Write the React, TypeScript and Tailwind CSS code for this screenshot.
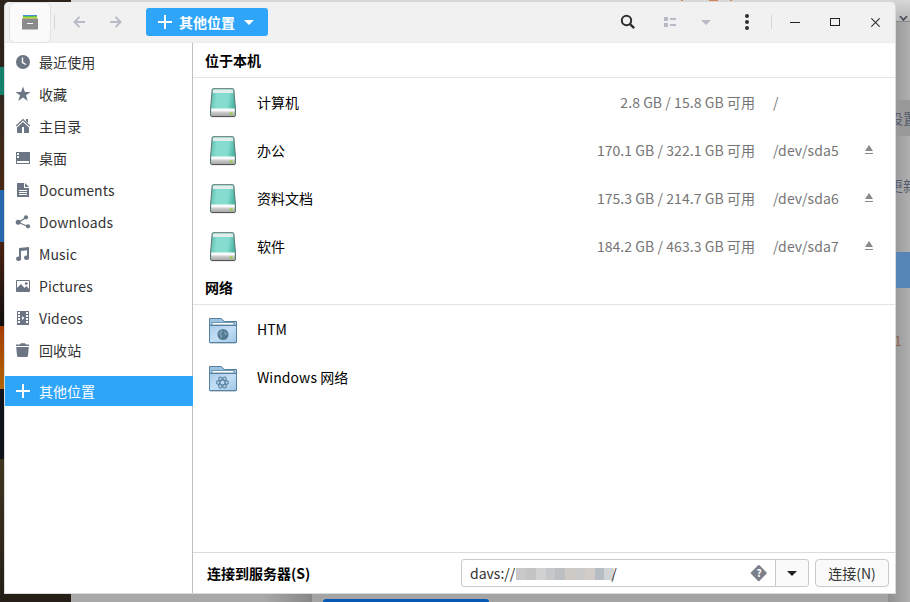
/**
 * Files window, "Other Locations" view
 * Header bar, places sidebar, mounted volumes, network list and server bar
 */
import type { ReactNode } from "react";

interface Place {
  label: string;
  icon: ReactNode;
}

interface Volume {
  name: string;
  usage: string;
  mount: string;
  ejectable: boolean;
}

/* ─── Sidebar icons ─── */
const places: Place[] = [
  {
    label: "最近使用",
    icon: (
      <>
        <circle cx="8" cy="8" r="7" />
        <path d="M7.5 3.5V8.5L11 10.5" fill="none" stroke="#fff" strokeWidth="1.4" />
      </>
    ),
  },
  {
    label: "收藏",
    icon: <path d="M8 0.5L9.9 5.9H15.6L11 9.3L12.7 15L8 11.6L3.3 15L5 9.3L0.4 5.9H6.1Z" />,
  },
  {
    label: "主目录",
    icon: (
      <>
        <path d="M1.2 8L8 1.6L14.8 8" fill="none" stroke="#6b7583" strokeWidth="1.3" />
        <path d="M11 1H13V5L11 3.2Z" />
        <path d="M8 4L14 9.5V15H9V9H7V15H2V9.5Z" />
      </>
    ),
  },
  {
    label: "桌面",
    icon: (
      <>
        <path d="M1 2H15V14H1Z" />
        <path d="M2 11H14V13H2ZM2 3H4V5H2ZM2 6H4V8H2Z" fill="#fff" />
      </>
    ),
  },
  {
    label: "Documents",
    icon: (
      <>
        <path d="M2 1H9V6H14V15H2Z" />
        <path d="M10 1L14 5H10Z" />
        <path d="M4 8.5H12M4 10.5H12M4 12.5H12" stroke="#fff" />
      </>
    ),
  },
  {
    label: "Downloads",
    icon: (
      <>
        <path d="M11 3.5L3.5 8.5L13 12.5" fill="none" stroke="#6b7583" strokeWidth="1.2" />
        <circle cx="11" cy="3.3" r="2.1" />
        <circle cx="3.2" cy="8.3" r="2.5" />
        <circle cx="13" cy="12.3" r="2.1" />
      </>
    ),
  },
  {
    label: "Music",
    icon: (
      <>
        <path d="M4 2L14 1V12H12V4.3L6 5V13H4Z" />
        <ellipse cx="3.6" cy="12.8" rx="2.6" ry="2.2" />
        <ellipse cx="11.6" cy="11.8" rx="2.6" ry="2.2" />
      </>
    ),
  },
  {
    label: "Pictures",
    icon: (
      <>
        <path d="M1.5 2.5H14.5V13.5H1.5Z" fill="none" stroke="#6b7583" />
        <path d="M2 10L6 6L9.5 10L11.5 8L14 11V13H2Z" />
        <circle cx="11.2" cy="5.6" r="1.4" />
      </>
    ),
  },
  {
    label: "Videos",
    icon: (
      <>
        <path d="M2 1H14V15H2Z" />
        <path d="M4 2V14M12 2V14" stroke="#fff" strokeWidth="2" strokeDasharray="2 1" />
        <path d="M7 6L9.5 8L7 10Z" fill="#fff" />
      </>
    ),
  },
  {
    label: "回收站",
    icon: (
      <>
        <path d="M1 2.4H5L6 1.2H10L11 2.4H14V4H1Z" />
        <path d="M1.2 5H13.8L13 13.5Q12.8 15 11.5 15H3.5Q2.2 15 2 13.5Z" />
      </>
    ),
  },
];

const volumes: Volume[] = [
  { name: "计算机", usage: "2.8 GB / 15.8 GB 可用", mount: "/", ejectable: false },
  { name: "办公", usage: "170.1 GB / 322.1 GB 可用", mount: "/dev/sda5", ejectable: true },
  { name: "资料文档", usage: "175.3 GB / 214.7 GB 可用", mount: "/dev/sda6", ejectable: true },
  { name: "软件", usage: "184.2 GB / 463.3 GB 可用", mount: "/dev/sda7", ejectable: true },
];

function DriveIcon() {
  return (
    <svg width="28" height="30" viewBox="0 0 28 30" className="-mt-px shrink-0">
      <defs>
        <linearGradient id="teal" x1="0" x2="1" y1="0" y2="0.15">
          <stop offset="0" stopColor="#55b9a9" />
          <stop offset="0.3" stopColor="#86dccf" />
          <stop offset="0.75" stopColor="#84dccf" />
          <stop offset="1" stopColor="#4cb5a4" />
        </linearGradient>
        <linearGradient id="steel" x1="0" x2="0" y1="0" y2="1">
          <stop offset="0" stopColor="#fff" />
          <stop offset="0.35" stopColor="#f4f4f4" />
          <stop offset="0.45" stopColor="#cfcfcf" />
          <stop offset="1" stopColor="#a9a9a9" />
        </linearGradient>
      </defs>
      <path d="M3.2 1.5Q3.3 0.7 4.2 0.7H23.8Q24.7 0.7 24.8 1.5L26.5 21V27Q26.5 28.5 25 28.5H3Q1.5 28.5 1.5 27V21Z" fill="url(#teal)" stroke="#5d7572" />
      <path d="M4.2 1.4H23.8L24.2 5H3.8Z" fill="#e2ecea" />
      <path d="M2.2 20.5H25.8V27Q25.8 28 24.8 28H3.2Q2.2 28 2.2 27Z" fill="url(#steel)" />
      <path d="M2.5 28.6H25.5" stroke="#515151" />
      <ellipse cx="22.3" cy="25.5" rx="1.6" ry="1.1" fill="#8fd01c" />
    </svg>
  );
}

function FolderIcon({ children }: { children: ReactNode }) {
  return (
    <svg width="30" height="28" viewBox="0 0 30 28" className="mt-0.5 shrink-0">
      <defs>
        <linearGradient id="folder" x1="0" x2="1" y1="0" y2="1">
          <stop offset="0" stopColor="#a9cbe9" />
          <stop offset="0.5" stopColor="#c3def5" />
          <stop offset="1" stopColor="#a0c5e6" />
        </linearGradient>
      </defs>
      <path d="M1.5 8V1.5H13L16.5 4.5H28.5V10H1.5Z" fill="#9cc2e3" stroke="#5582a0" />
      <path d="M4 5.5H26V8H4Z" fill="#fff" stroke="#5582a0" strokeWidth="0.8" />
      <path d="M1.5 8.5H28.5V25.5H1.5Z" fill="url(#folder)" stroke="#5582a0" />
      <path d="M2 26.5H28" stroke="#7e8f9b" strokeOpacity="0.4" />
      {children}
    </svg>
  );
}

/* ─── Desktop behind the window ─── */
function Backdrop() {
  return (
    <div className="absolute inset-0 flex bg-[#a5a5a5]">
      <div className="flex w-[71px] shrink-0 flex-col">
        <div className="h-[67px] bg-[#2c231d]" />
        <div className="h-[28px] bg-[#13816c]" />
        <div className="h-[95px] bg-linear-to-b from-[#33281e] to-[#4a2713]" />
        <div className="h-[52px] bg-[#2768ad]" />
        <div className="h-[84px] bg-linear-to-b from-[#4a220e] to-[#110c0d]" />
        <div className="h-[63px] bg-linear-to-b from-[#a63c05] to-[#b06503]" />
        <div className="h-[70px] bg-[#10131c]" />
        <div className="flex-1 bg-linear-to-b from-[#40351f] to-[#241e16]" />
      </div>
      <div className="flex min-w-0 flex-1 flex-col justify-between">
        <div className="flex h-[3px] items-start bg-[#d7d7d7]">
          <div className="ml-[610px] h-px w-[2px] bg-[#d38653]" />
          <div className="ml-[26px] h-px w-[9px] bg-[#d38653]" />
          <div className="ml-[12px] h-px w-[2px] bg-[#d38653]" />
        </div>
        <div className="flex h-[9px]">
          <div className="w-[240px] shrink-0 bg-linear-to-r from-[#a8a8a8] from-80% to-[#888]" />
          <div className="flex flex-1 items-end border-l border-[#858585] bg-[#a4a4a4]">
            <div className="ml-[11px] h-[3px] w-[166px] rounded-t-lg bg-[#0759b5]" />
          </div>
        </div>
      </div>
      <div className="flex w-[22px] shrink-0 flex-col bg-linear-to-r from-[#8f8f8f] to-[#b0b0b0] text-sm text-[#555c6c]">
        <div className="flex h-[22px] items-end border-b border-[#888] bg-linear-to-b from-[#d7d7d7] to-[#b5b5b5]">
          <svg width="9" height="5" viewBox="0 0 9 5" className="ml-[11px]" fill="none" stroke="#3c4550" strokeWidth="1.5">
            <path d="M1 0L4.5 4L8 0" />
          </svg>
        </div>
        <div className="mt-[78px] flex h-[36px] items-center bg-[#999] pl-px whitespace-nowrap">设置</div>
        <div className="mt-[38px] flex h-[22px] items-center pl-px whitespace-nowrap">更新</div>
        <div className="mt-[56px] h-[36px] bg-[#5686b7]" />
        <div className="mt-[42px] h-[20px] pl-1.5 leading-5 text-[#8d6653]">1</div>
      </div>
    </div>
  );
}

function HeaderBar() {
  return (
    <header className="flex h-[41px] shrink-0 items-center border-b border-[#ebebeb] bg-[#f1f1f1] pl-1">
      <div className="flex h-[41px] w-[42px] items-center justify-center rounded-md border border-[#e2e2e2] bg-[#fafafa]">
        <svg width="16" height="15" viewBox="0 0 16 15">
          <path d="M1 0H15V2H1Z" fill="#4a90d9" />
          <path d="M1 1H15V3H1Z" fill="#56c44a" />
          <path d="M1 2.3H15V4H1Z" fill="#dce146" />
          <path d="M0 3.5H16V14.5H0Z" fill="#8b8b8b" />
          <path d="M5 8.5H11" stroke="#fff" />
        </svg>
      </div>
      <div className="ml-[3px] h-3.5 w-px bg-[#d5d5d5]" />
      <svg width="12" height="12" viewBox="0 0 12 12" className="ml-[18px]" fill="none" stroke="#b8bbc5" strokeWidth="1.9">
        <path d="M12 6H1.5M6.5 0.8L1.4 6L6.5 11.2" />
      </svg>
      <svg width="12" height="12" viewBox="0 0 12 12" className="ml-[25px]" fill="none" stroke="#b8bbc5" strokeWidth="1.9">
        <path d="M0 6H10.5M5.5 0.8L10.6 6L5.5 11.2" />
      </svg>
      <button className="ml-6 flex h-7 w-[122px] items-center rounded-[3px] bg-[#2ea5f8] pl-3 text-sm font-bold text-white">
        <svg width="14" height="14" viewBox="0 0 14 14" stroke="#fff" strokeWidth="2">
          <path d="M7 0V14M0 7H14" />
        </svg>
        <span className="ml-[7px] leading-5">其他位置</span>
        <svg width="10" height="5" viewBox="0 0 10 5" className="ml-[9px]" fill="#fff">
          <path d="M0 0H10L5 5Z" />
        </svg>
      </button>
      <svg width="16" height="16" viewBox="0 0 16 16" className="ml-[352px]" fill="none" stroke="#2d2f30" strokeWidth="2">
        <circle cx="6.5" cy="6.5" r="4.7" />
        <path d="M9.8 9.8L14.2 14.2" strokeWidth="2.4" />
      </svg>
      <svg width="12" height="10" viewBox="0 0 12 10" className="ml-7" fill="#b8bbc5">
        <path d="M0 0H4V4H0ZM0 6H4V10H0ZM6 1H12V3H6ZM6 7H12V9H6Z" />
      </svg>
      <svg width="10" height="5" viewBox="0 0 10 5" className="ml-[25px]" fill="#b8bbc5">
        <path d="M0 0H10L5 5Z" />
      </svg>
      <svg width="4" height="16" viewBox="0 0 4 16" className="ml-[34px]" fill="#2d2f30">
        <circle cx="2" cy="2" r="2" />
        <circle cx="2" cy="8" r="2" />
        <circle cx="2" cy="14" r="2" />
      </svg>
      <div className="ml-[22px] h-3.5 w-px bg-[#d5d5d5]" />
      <div className="ml-[18px] h-px w-2.5 bg-[#222]" />
      <div className="ml-[30px] h-2 w-2.5 border border-[#222]" />
      <svg width="9" height="9" viewBox="0 0 9 9" className="ml-[31px]" stroke="#333" strokeWidth="1.1">
        <path d="M0.3 0.3L8.7 8.7M8.7 0.3L0.3 8.7" />
      </svg>
    </header>
  );
}

function Sidebar() {
  return (
    <nav className="w-[188px] shrink-0 border-r border-[#bfc0c2] pt-1 text-sm text-[#333]">
      {places.map((place) => (
        <div key={place.label} className="flex h-8 items-center pl-2.5">
          <svg width="16" height="16" viewBox="0 0 16 16" fill="#6b7583" className="-mt-0.5">
            {place.icon}
          </svg>
          <span className="-mt-0.5 ml-2 leading-5 tracking-[0.1px]">{place.label}</span>
        </div>
      ))}
      <div className="-mr-px mt-[9px] flex h-[30px] items-center bg-[#2ea5f8] pl-[11px] text-white">
        <svg width="14" height="14" viewBox="0 0 14 14" stroke="#fff" strokeWidth="2">
          <path d="M7 0V14M0 7H14" />
        </svg>
        <span className="ml-[9px] leading-5">其他位置</span>
      </div>
    </nav>
  );
}

function ServerBar() {
  return (
    <footer className="flex h-[41px] items-center border-t border-[#dcdcde] pr-1.5 pl-3.5 text-sm">
      <span className="w-[254px] font-bold">连接到服务器(S)</span>
      <div className="flex h-7 w-[348px] items-center rounded-[3px] border border-[#cacaca] pl-2 text-[#333]">
        <span>davs://</span>
        <div className="mt-0.5 ml-px flex h-3 w-[98px]">
          <div className="flex-1 bg-[#c9c9c9]" />
          <div className="flex-1 bg-[#c4c4c4]" />
          <div className="flex-1 bg-[#d1d1d1]" />
          <div className="flex-1 bg-[#c5c7c8]" />
          <div className="flex-1 bg-[#bbbfc1]" />
          <div className="flex-1 bg-[#cecac6]" />
          <div className="flex-1 bg-[#cacaca]" />
          <div className="flex-1 bg-[#d3cbc8]" />
          <div className="flex-1 bg-[#b6bcc3]" />
          <div className="flex-1 bg-[#d0d4d7]" />
        </div>
        <span className="-ml-[3px]">/</span>
        <div className="ml-auto flex h-full items-center">
          <div className="mr-2 grid size-4 place-items-center">
            <div className="col-start-1 row-start-1 size-[11.5px] rotate-45 rounded-[1px] bg-[#7c808b]" />
            <span className="z-10 col-start-1 row-start-1 text-[10px] leading-none font-bold text-white">?</span>
          </div>
          <div className="flex h-full w-[33px] items-center justify-center rounded-r-[3px] border-l border-[#cacaca] bg-[#fafafa]">
            <svg width="10" height="5" viewBox="0 0 10 5" fill="#222">
              <path d="M0 0H10L5 5Z" />
            </svg>
          </div>
        </div>
      </div>
      <button className="ml-1.5 h-7 w-[74px] rounded-[4px] border border-[#cacaca] bg-[#fafafa] leading-5 text-[#333]">
        连接(N)
      </button>
    </footer>
  );
}

export default function App() {
  return (
    <div className="relative h-[602px] w-[910px] overflow-hidden font-['Noto_Sans_CJK_SC',sans-serif]">
      <Backdrop />
      <div className="relative h-full pt-0.5 pl-1">
        <div className="flex h-[592px] w-[892px] flex-col overflow-hidden rounded-t-[5px] border-x border-b border-[#d9dadc] bg-white">
          <HeaderBar />
          <div className="flex min-h-0 flex-1">
            <Sidebar />
            <main className="flex flex-1 flex-col text-sm text-black">
              <h2 className="flex h-[35px] items-center border-b border-[#e3e3e5] pl-3 font-bold">位于本机</h2>
              <div className="pt-px">
                {volumes.map((volume) => (
                  <div key={volume.name} className="flex h-12 items-center pl-4">
                    <DriveIcon />
                    <span className="-mt-0.5 ml-5 flex-1">{volume.name}</span>
                    <span className="-mt-0.5 tracking-[0.06px] text-[#757575]">{volume.usage}</span>
                    <span className="-mt-0.5 ml-[18px] w-[92px] tracking-[0.1px] text-[#757575]">{volume.mount}</span>
                    <div className="-mt-1 w-[30px]">
                      {volume.ejectable && (
                        <svg width="8" height="9" viewBox="0 0 8 9" fill="#8a8a8a">
                          <path d="M4 0L8 6H0ZM0 8H8V9H0Z" />
                        </svg>
                      )}
                    </div>
                  </div>
                ))}
              </div>
              <h2 className="flex h-[34px] items-center border-b border-[#e3e3e5] pb-0.5 pl-3 font-bold">网络</h2>
              <div className="flex-1 pt-px">
                <div className="flex h-12 items-center pl-[15px]">
                  <FolderIcon>
                    <circle cx="15" cy="17.5" r="5.5" fill="#527a93" />
                    <path d="M10.5 16L13 13L15 14L13.5 17L15 19L13 21.5ZM16.5 14L19.3 16L18 19L16 17Z" fill="#7496ad" />
                  </FolderIcon>
                  <span className="-mt-0.5 ml-[19px]">HTM</span>
                </div>
                <div className="flex h-12 items-center pl-[15px]">
                  <FolderIcon>
                    <g fill="none" stroke="#6089a5" strokeWidth="1.2">
                      <ellipse cx="14.5" cy="17.5" rx="2.4" ry="6" transform="rotate(30 14.5 17.5)" />
                      <ellipse cx="14.5" cy="17.5" rx="2.4" ry="6" transform="rotate(90 14.5 17.5)" />
                      <ellipse cx="14.5" cy="17.5" rx="2.4" ry="6" transform="rotate(150 14.5 17.5)" />
                    </g>
                    <circle cx="14.5" cy="17.5" r="1.6" fill="#b9d7f0" />
                  </FolderIcon>
                  <span className="-mt-0.5 ml-[19px] tracking-[0.06px]">Windows 网络</span>
                </div>
              </div>
              <ServerBar />
            </main>
          </div>
        </div>
      </div>
    </div>
  );
}
